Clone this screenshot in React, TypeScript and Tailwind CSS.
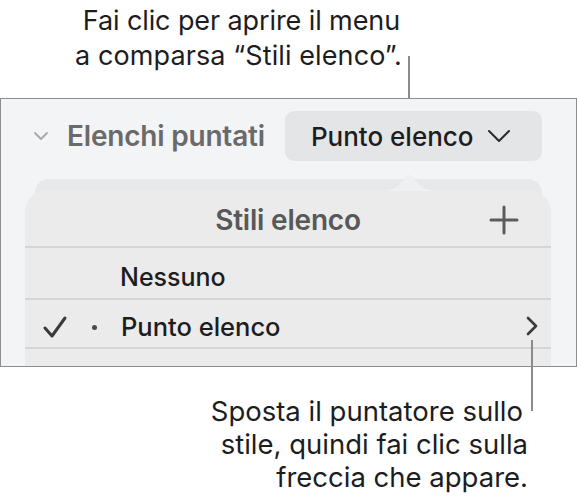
import React from "react";

export default function App() {
  return (
    <div className="relative w-[577px] h-[497px] overflow-hidden bg-white font-['Inter','Noto_Sans',sans-serif] text-[#1d1d1f]">
      {/* top callout */}
      <div className="pt-[3px] pr-[175px] text-right text-[27px] leading-[35px] tracking-[-0.1px]">
        <div className="mr-[2px]">Fai clic per aprire il menu</div>
        <div className="tracking-[0.1px]">a comparsa “Stili elenco”.</div>
      </div>
      <div className="absolute left-[408px] top-[56px] w-[2px] h-[55px] bg-[#8a8a8a]" />

      {/* frame */}
      <div className="relative mt-[25px] h-[269px] w-[577px] border border-[#8e8e8e] bg-[#f3f4f6] overflow-hidden">
        <div className="flex items-center h-[50px] mt-[12px]">
          <svg width="16" height="10" viewBox="0 0 16 10" className="ml-[32px]">
            <path d="M2 2 L8 8 L14 2" fill="none" stroke="#a8a8a8" strokeWidth="1.8" strokeLinecap="round" strokeLinejoin="round" />
          </svg>
          <span className="ml-[18px] text-[28px] font-semibold text-[#6a6a6a] tracking-[-0.2px]">Elenchi puntati</span>
          <div className="ml-[20px] flex items-center w-[257px] h-[50px] rounded-[9px] bg-[#e4e5e7] pl-[26px]">
            <span className="text-[26px] font-medium text-[#1d1d1f]">Punto elenco</span>
            <svg width="24" height="14" viewBox="0 0 24 14" className="ml-[13px]">
              <path d="M2 2 L12 12 L22 2" fill="none" stroke="#2a2a2a" strokeWidth="2" strokeLinecap="round" strokeLinejoin="round" />
            </svg>
          </div>
        </div>

        {/* area below */}
        <div className="relative mt-[18px] mx-[34px] h-[200px] rounded-t-[14px] bg-[#e7e8ea]" />

        {/* popover */}
        <div className="absolute left-[24px] top-[91px] w-[526px] h-[200px] rounded-t-[22px] bg-[#ebebeb]">
          <svg width="58" height="24" viewBox="0 0 58 24" className="absolute left-[355px] top-[-23px]">
            <path d="M0 24 C14 24 19 19 24 12 Q29 3 34 12 C39 19 44 24 58 24 Z" fill="#eef0f1" />
          </svg>
          <div className="relative flex items-center justify-center h-[58px] pt-[3px] border-b-2 border-[#d5d5d5]">
            <span className="text-[28px] font-semibold text-[#585858] tracking-[-0.2px]">Stili elenco</span>
            <svg width="30" height="30" viewBox="0 0 30 30" className="absolute right-[32px] top-[15px]">
              <path d="M15 2 V28 M2 15 H28" stroke="#5c5c5c" strokeWidth="3" strokeLinecap="round" />
            </svg>
          </div>
          <div className="flex items-center h-[52px] pl-[95px] pt-[10px] border-b-2 border-[#d5d5d5]">
            <span className="text-[25px] font-medium">Nessuno</span>
          </div>
          <div className="relative flex items-center h-[49px] pt-[7px] border-b-2 border-[#d5d5d5]">
            <svg width="26" height="24" viewBox="0 0 26 24" className="ml-[17px]">
              <path d="M3 13 L10 21 L23 3" fill="none" stroke="#3a3a3a" strokeWidth="3" strokeLinecap="round" strokeLinejoin="round" />
            </svg>
            <span className="ml-[24px] w-[5px] h-[5px] rounded-full bg-[#4a4a4a]" />
            <span className="ml-[24px] text-[25.5px] font-medium">Punto elenco</span>
            <svg width="14" height="20" viewBox="0 0 14 20" className="absolute right-[12px] top-[16px]">
              <path d="M3 2 L11 10 L3 18" fill="none" stroke="#3a3a3a" strokeWidth="2.6" strokeLinecap="round" strokeLinejoin="round" />
            </svg>
          </div>
        </div>
      </div>

      {/* bottom callout leader */}
      <div className="absolute left-[531px] top-[340px] w-[2px] h-[71px] bg-[#8a8a8a]" />
      <div className="pt-[28px] pr-[49px] text-right text-[27.5px] leading-[33px] tracking-[0px]">
        <div className="mr-[5px]">Sposta il puntatore sullo</div>
        <div>stile, quindi fai clic sulla</div>
        <div>freccia che appare.</div>
      </div>
    </div>
  );
}
